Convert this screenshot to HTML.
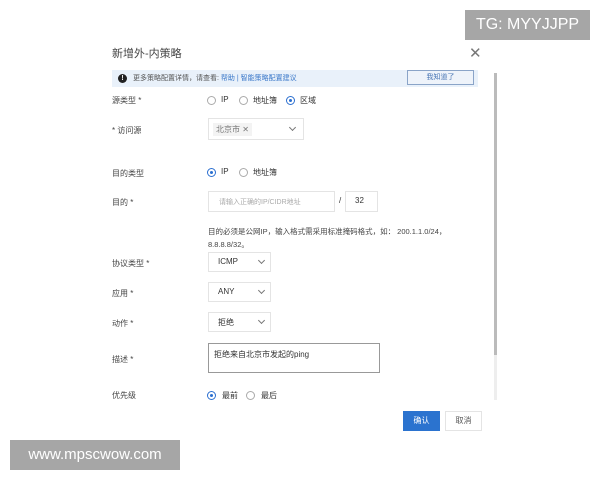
<!DOCTYPE html>
<html><head><meta charset="utf-8"><style>
*{margin:0;padding:0;box-sizing:border-box}
body{width:600px;height:480px;background:#fff;position:relative;overflow:hidden;font-family:"Liberation Sans","Noto Sans CJK SC",sans-serif;color:#333;font-size:8px}
.a{position:absolute;white-space:nowrap}
.lbl{position:absolute;left:112px;font-size:8px;color:#444}
.box{position:absolute;border:1px solid #e4e4e4;background:#fff}
.r{position:absolute;width:9px;height:9px;border:1px solid #aaa;border-radius:50%}
.r.on{border-color:#2b6fd0}
.r.on:after{content:"";position:absolute;left:2px;top:2px;width:3px;height:3px;border-radius:50%;background:#2b6fd0}
.chev{position:absolute;width:5px;height:5px;border-right:1px solid #777;border-bottom:1px solid #777;transform:rotate(45deg)}
</style></head><body>
<div class="a" style="left:465px;top:10px;width:125px;height:30px;background:#a6a6a6;color:#fff;font-size:16px;line-height:30px;text-align:center">TG: MYYJJPP</div>
<div class="a" style="left:10px;top:440px;width:170px;height:30px;background:#a6a6a6;color:#fff;font-size:15px;line-height:30px;text-align:center">www.mpscwow.com</div>

<div class="a" style="left:112px;top:45px;font-size:11px;color:#444">新增外-内策略</div>
<div class="a" style="left:469px;top:44px;font-size:15px;color:#777">✕</div>

<div class="a" style="left:112px;top:70px;width:366px;height:17px;background:#e9f1fa"></div>
<div class="a" style="left:118px;top:74px;width:9px;height:9px;border-radius:50%;background:#222;color:#fff;font-size:7px;line-height:9px;text-align:center;font-weight:bold">!</div>
<div class="a" style="left:133px;top:73px;font-size:7px;color:#555">更多策略配置详情，请查看: <span style="color:#3a78c9">帮助 | 智能策略配置建议</span></div>
<div class="a" style="left:407px;top:70px;width:67px;height:15px;border:1px solid #8aa4c8;background:#eef3fa;color:#4a77b5;font-size:7px;line-height:13px;text-align:center">我知道了</div>

<div class="a" style="left:494px;top:73px;width:3px;height:327px;background:#eee"></div>
<div class="a" style="left:494px;top:73px;width:3px;height:282px;background:#bbb"></div>

<div class="lbl" style="top:95px">源类型 *</div>
<div class="r" style="left:207px;top:96px"></div><div class="a" style="left:221px;top:95px">IP</div>
<div class="r" style="left:239px;top:96px"></div><div class="a" style="left:253px;top:95px">地址簿</div>
<div class="r on" style="left:286px;top:96px"></div><div class="a" style="left:300px;top:95px">区域</div>

<div class="lbl" style="top:125px">* 访问源</div>
<div class="box" style="left:208px;top:118px;width:96px;height:22px"></div>
<div class="a" style="left:213px;top:123px;background:#f3f3f3;padding:1px 3px;color:#777">北京市 ✕</div>
<div class="chev" style="left:290px;top:125px"></div>

<div class="lbl" style="top:168px">目的类型</div>
<div class="r on" style="left:207px;top:168px"></div><div class="a" style="left:221px;top:167px">IP</div>
<div class="r" style="left:239px;top:168px"></div><div class="a" style="left:253px;top:167px">地址簿</div>

<div class="lbl" style="top:197px">目的 *</div>
<div class="box" style="left:208px;top:191px;width:127px;height:21px"></div>
<div class="a" style="left:219px;top:197px;color:#aaa;font-size:7px">请输入正确的IP/CIDR地址</div>
<div class="a" style="left:339px;top:196px">/</div>
<div class="box" style="left:345px;top:191px;width:33px;height:21px"></div>
<div class="a" style="left:355px;top:196px">32</div>

<div class="a" style="left:208px;top:226px;font-size:7.5px;color:#444">目的必须是公网IP，输入格式需采用标准掩码格式，如： 200.1.1.0/24，</div>
<div class="a" style="left:208px;top:239px;font-size:7.5px;color:#444">8.8.8.8/32。</div>

<div class="lbl" style="top:258px">协议类型 *</div>
<div class="box" style="left:208px;top:252px;width:63px;height:20px"></div>
<div class="a" style="left:218px;top:257px">ICMP</div><div class="chev" style="left:259px;top:258px"></div>

<div class="lbl" style="top:288px">应用 *</div>
<div class="box" style="left:208px;top:282px;width:63px;height:20px"></div>
<div class="a" style="left:218px;top:287px">ANY</div><div class="chev" style="left:259px;top:288px"></div>

<div class="lbl" style="top:318px">动作 *</div>
<div class="box" style="left:208px;top:312px;width:63px;height:20px"></div>
<div class="a" style="left:218px;top:317px">拒绝</div><div class="chev" style="left:259px;top:318px"></div>

<div class="lbl" style="top:354px">描述 *</div>
<div class="a" style="left:208px;top:343px;width:172px;height:30px;border:1px solid #999"></div>
<div class="a" style="left:214px;top:349px">拒绝来自北京市发起的ping</div>

<div class="lbl" style="top:390px">优先级</div>
<div class="r on" style="left:207px;top:391px"></div><div class="a" style="left:222px;top:390px">最前</div>
<div class="r" style="left:246px;top:391px"></div><div class="a" style="left:261px;top:390px">最后</div>

<div class="a" style="left:403px;top:411px;width:37px;height:20px;background:#2b73cf;color:#fff;line-height:20px;text-align:center">确认</div>
<div class="a" style="left:445px;top:411px;width:37px;height:20px;border:1px solid #e4e4e4;line-height:18px;text-align:center;color:#555">取消</div>
</body></html>
